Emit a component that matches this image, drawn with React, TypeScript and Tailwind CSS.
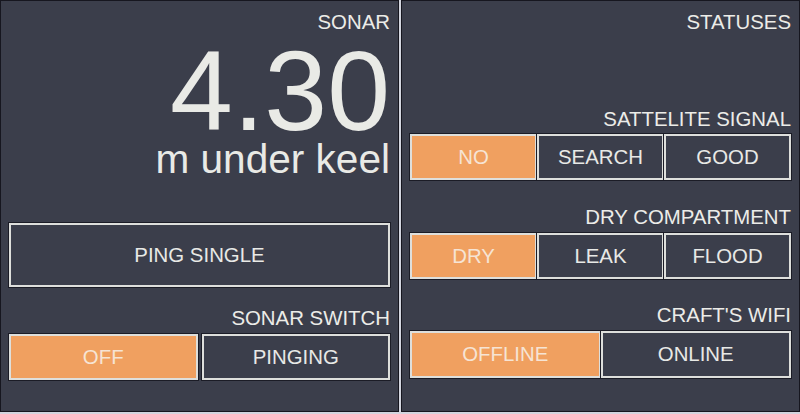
import { FC } from 'react';
import clsx from 'clsx';

const LABEL = 'text-right text-[20.4px] leading-[23px] text-[#ecece8]';

const SegButton: FC<{ label: string; active?: boolean; className?: string }> = ({ label, active, className }) => (
  <div
    className={clsx(
      'flex flex-1 items-center justify-center border-2 border-[#dedfdc] shadow-[0_0_0_1px_#1b1c26] text-[20.4px]',
      active ? 'bg-[#f0a060] text-[#f6e4d4]' : 'bg-[#3b3e4b] text-[#e8e9e6]',
      className,
    )}
  >
    {label}
  </div>
);

const Segmented: FC<{ options: string[]; active: number; className?: string; gap?: boolean }> = ({
  options,
  active,
  className,
  gap,
}) => (
  <div className={clsx('flex h-[46px]', gap && 'gap-[4px]', className)}>
    {options.map((o, i) => (
      <SegButton key={o} label={o} active={i === active} />
    ))}
  </div>
);

const Panel: FC<{ children: React.ReactNode }> = ({ children }) => (
  <div className="flex-1 flex flex-col border border-[#16161f] bg-[#3b3e4b] px-[8px] pt-[10px]">{children}</div>
);

export default function App() {
  return (
    <div
      className="w-[800px] h-[414px] flex gap-[2px] pb-[2px] bg-[#d3d5df]"
      style={{ fontFamily: '"Liberation Sans", Arial, sans-serif' }}
    >
      <Panel>
        <div className={LABEL}>SONAR</div>
        <div className="mt-[7px] text-right text-[113px] leading-[100px] text-[#e9eae6]">4.30</div>
        <div className="text-right text-[40.6px] leading-[36px] text-[#e9eae6]">m under keel</div>
        <div className="mt-[46px] flex h-[64px]">
          <SegButton label="PING SINGLE" />
        </div>
        <div className={clsx(LABEL, 'mt-[20px]')}>SONAR SWITCH</div>
        <Segmented className="mt-[4px]" options={['OFF', 'PINGING']} active={0} gap />
      </Panel>
      <Panel>
        <div className={LABEL}>STATUSES</div>
        <div className={clsx(LABEL, 'mt-[74px]')}>SATTELITE SIGNAL</div>
        <Segmented className="mt-[3px]" options={['NO', 'SEARCH', 'GOOD']} active={0} />
        <div className={clsx(LABEL, 'mt-[26px]')}>DRY COMPARTMENT</div>
        <Segmented className="mt-[4px]" options={['DRY', 'LEAK', 'FLOOD']} active={0} />
        <div className={clsx(LABEL, 'mt-[25px]')}>CRAFT'S WIFI</div>
        <Segmented className="mt-[4px] !h-[47px]" options={['OFFLINE', 'ONLINE']} active={0} />
      </Panel>
    </div>
  );
}
